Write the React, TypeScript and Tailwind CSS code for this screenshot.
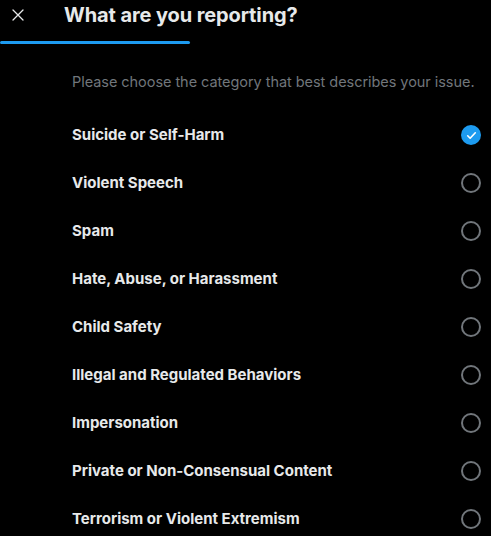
import React from 'react';

const options = [
  'Suicide or Self-Harm',
  'Violent Speech',
  'Spam',
  'Hate, Abuse, or Harassment',
  'Child Safety',
  'Illegal and Regulated Behaviors',
  'Impersonation',
  'Private or Non-Consensual Content',
  'Terrorism or Violent Extremism',
];

const Radio: React.FC<{ checked: boolean }> = ({ checked }) =>
  checked ? (
    <span className="flex h-[20px] w-[20px] items-center justify-center rounded-full bg-[#1d9bf0]">
      <svg viewBox="0 0 24 24" className="h-[13px] w-[13px]" fill="none" stroke="white" strokeWidth="3" strokeLinecap="round" strokeLinejoin="round">
        <path d="M5 12.5l4.5 4.5L19 7" />
      </svg>
    </span>
  ) : (
    <span className="block h-[20px] w-[20px] rounded-full border-2 border-[#71767b]" />
  );

export default function App() {
  return (
    <div className="h-[536px] w-full overflow-hidden bg-black text-[#e7e9ea]" style={{ fontFamily: 'Inter, "Noto Sans", sans-serif' }}>
      <div className="flex h-[30px] items-center">
        <div className="flex w-[64px] items-center pl-[12px]">
          <svg viewBox="0 0 24 24" className="h-[12px] w-[12px]" fill="none" stroke="#e7e9ea" strokeWidth="2.6" strokeLinecap="round">
            <path d="M2 2L22 22M22 2L2 22" />
          </svg>
        </div>
        <h1 className="text-[20px] font-bold leading-[24px] tracking-[-0.1px]">What are you reporting?</h1>
      </div>
      <div className="mt-[11px] h-[3px] w-[190px] rounded-full bg-[#1d9bf0]" />
      <div className="pl-[72px] pr-[10px]">
        <p className="mt-[28px] whitespace-nowrap text-[14.5px] leading-[20px] tracking-[-0.05px] text-[#71767b]">
          Please choose the category that best describes your issue.
        </p>
        <ul className="mt-[19px]">
          {options.map((o, i) => (
            <li key={o} className="flex h-[48px] items-center justify-between">
              <span className="text-[15px] font-bold leading-[20px]">{o}</span>
              <Radio checked={i === 0} />
            </li>
          ))}
        </ul>
      </div>
    </div>
  );
}
